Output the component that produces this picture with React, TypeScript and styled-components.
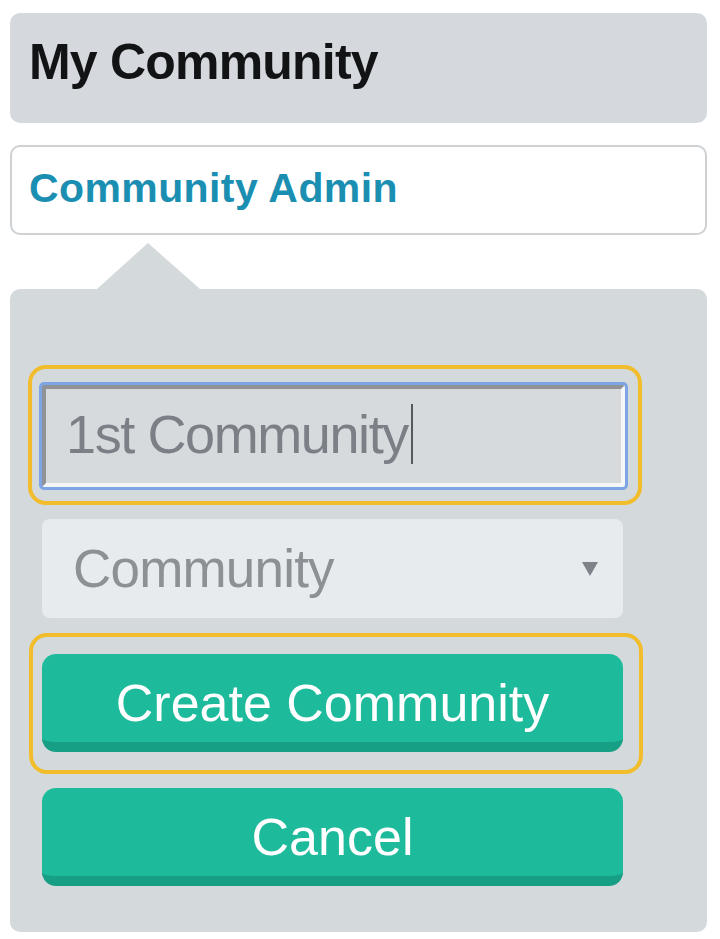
import styled, { createGlobalStyle } from "styled-components";

const GlobalStyle = createGlobalStyle`
  html, body {
    margin: 0;
    background: #ffffff;
  }
  body {
    font-family: "Liberation Sans", Arial, sans-serif;
  }
`;

const Page = styled.div`
  width: 697px;
  padding: 13px 13px 0 10px;
`;

const TitleBar = styled.div`
  background: #d5d9dd;
  border-radius: 10px;
  padding: 21px 16px 33px 19px;
`;

const Title = styled.h1`
  margin: 0;
  font-size: 50px;
  line-height: 56px;
  font-weight: 700;
  letter-spacing: -0.8px;
  color: #111315;
`;

const AdminCard = styled.div`
  margin-top: 22px;
  background: #ffffff;
  border: 2px solid #cdd1d4;
  border-radius: 10px;
  padding: 18px 16px 22px 17px;
`;

const AdminLink = styled.a`
  display: block;
  font-size: 41px;
  line-height: 46px;
  font-weight: 700;
  letter-spacing: 0.4px;
  color: #1b8fb2;
  text-decoration: none;
`;

const Popover = styled.div`
  position: relative;
  margin-top: 54px;
  background: #d4d9dc;
  border-radius: 10px;
  padding: 76px 84px 46px 32px;

  &::before {
    content: "";
    position: absolute;
    top: -46px;
    left: 87px;
    border-left: 51px solid transparent;
    border-right: 52px solid transparent;
    border-bottom: 46px solid #d4d9dc;
  }
`;

const Form = styled.form`
  display: flex;
  flex-direction: column;
`;

const FocusRing = styled.div<{ $pad: string; $left: number; $right: number }>`
  margin: 0 -${(p) => p.$right}px 0 -${(p) => p.$left}px;
  border: 4px solid #f2bd2c;
  border-radius: 18px;
  padding: ${(p) => p.$pad};
`;

const TextField = styled.div`
  display: flex;
  align-items: center;
  height: 102px;
  box-sizing: border-box;
  padding: 0 15px 4px 20px;
  background: #d6dadd;
  border: 4px solid;
  border-color: #8f9398 #f4f6f8 #f4f6f8 #8f9398;
  border-radius: 2px;
  outline: 3px solid #7da4e4;
  font-size: 54px;
  letter-spacing: -1.4px;
  color: #7b8086;
`;

const Caret = styled.span`
  display: inline-block;
  width: 2px;
  height: 60px;
  margin-left: 3px;
  background: #55595e;
`;

const SelectBox = styled.div`
  margin-top: 14px;
  height: 99px;
  box-sizing: border-box;
  display: flex;
  align-items: center;
  justify-content: space-between;
  padding: 0 25px 0 31px;
  background: #e8ebee;
  border-radius: 8px;
  font-size: 53px;
  letter-spacing: -0.8px;
  color: #8c9196;
`;

const ActionButton = styled.button`
  display: flex;
  align-items: center;
  justify-content: center;
  width: 100%;
  height: 98px;
  box-sizing: border-box;
  padding: 10px 0 0;
  border: 0;
  border-bottom: 10px solid #179f86;
  border-radius: 14px;
  background: #1dbb9b;
  font-family: "Liberation Sans", Arial, sans-serif;
  font-size: 52px;
  line-height: 58px;
  color: #ffffff;
  cursor: pointer;
`;

const Spaced = styled.div<{ $top: number }>`
  margin-top: ${(p) => p.$top}px;
`;

function ArrowDown() {
  return (
    <svg width="16" height="14" viewBox="0 0 16 14" aria-hidden="true">
      <path d="M0 0h16L8 14z" fill="#7d8388" />
    </svg>
  );
}

export default function App() {
  return (
    <>
      <GlobalStyle />
      <Page>
        <TitleBar>
          <Title>My Community</Title>
        </TitleBar>
        <AdminCard>
          <AdminLink href="#">Community Admin</AdminLink>
        </AdminCard>
        <Popover>
          <Form onSubmit={(e) => e.preventDefault()}>
            <FocusRing $pad="16px 13px 14px 10px" $left={14} $right={19}>
              <TextField role="textbox">
                1st Community
                <Caret />
              </TextField>
            </FocusRing>
            <SelectBox role="combobox">
              <span>Community</span>
              <ArrowDown />
            </SelectBox>
            <Spaced $top={15}>
              <FocusRing $pad="17px 16px 18px 9px" $left={13} $right={20}>
                <ActionButton type="submit">Create Community</ActionButton>
              </FocusRing>
            </Spaced>
            <Spaced $top={14}>
              <ActionButton type="button">Cancel</ActionButton>
            </Spaced>
          </Form>
        </Popover>
      </Page>
    </>
  );
}
